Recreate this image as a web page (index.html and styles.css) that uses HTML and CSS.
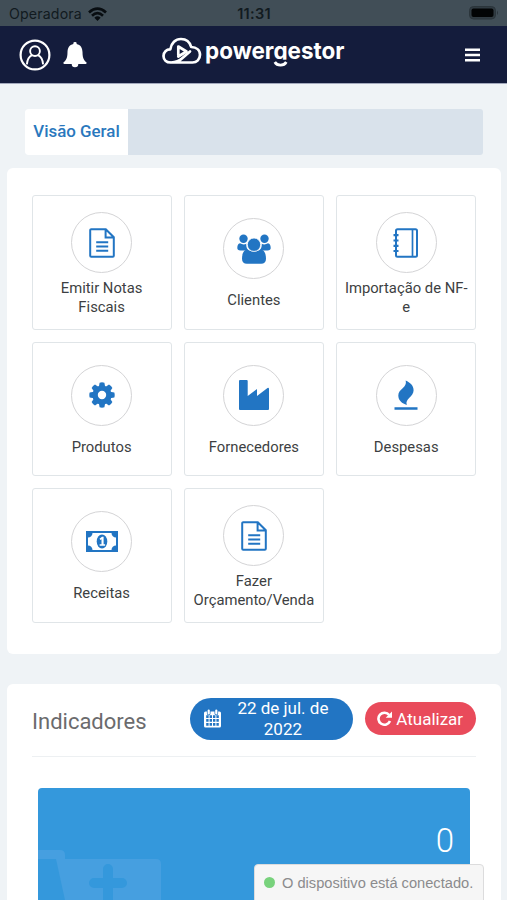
FILE: index.html
```html
<!DOCTYPE html>
<html lang="pt-BR">
<head>
<meta charset="utf-8">
<title>Powergestor</title>
<link rel="stylesheet" href="styles.css">
</head>
<body>
<svg class="defs" aria-hidden="true">
  <symbol id="file" viewBox="0 0 26 30">
    <path d="M2.2 1.2h14.6l8 8v18.6a1 1 0 0 1-1 1H2.200a1 1 0 0 1-1-1V2.200a1 1 0 0 1 1-1zM16.600 1.500v8h8M7.200 14.200h12M7.200 18.500h12M7.200 22.800h12" fill="none" stroke="currentColor" stroke-width="2"/>
  </symbol>
</svg>
<div class="status">
  <div class="carrier">Operadora
    <svg width="19" height="14" viewBox="0 0 19 14"><g fill="none" stroke="#080d11" stroke-width="2.700"><path d="M1 5.400Q9.500-2.200 18 5.400"/><path d="M4 8.700Q9.500 3.700 15 8.700"/></g><path d="M6.400 10.700Q9.500 8 12.600 10.700L9.500 14z" fill="#080d11"/></svg>
  </div>
  <div class="clock">11:31</div>
  <svg class="battery" width="30" height="14" viewBox="0 0 30 14"><rect x=".5" y=".5" width="26" height="12.500" rx="4" fill="#303b42" stroke="#2b353b"/><rect x="2.500" y="2.500" width="22" height="8.500" rx="2" fill="#020405"/><path d="M28 4.500q2 2.300 0 4.600z" fill="#2b353b"/></svg>
</div>
<header class="header">
  <div class="tools">
    <svg width="32" height="32" viewBox="0 0 32 32" fill="none" stroke="#fff"><circle cx="16" cy="16" r="14.400" stroke-width="2.200"/><circle cx="16" cy="12.100" r="4.900" stroke-width="1.900"/><path d="M7.900 25.300C8.300 20.500 10.700 17.300 13 16.200M19 16.200c2.300 1.100 4.700 4.300 5.100 9.100" stroke-width="1.900"/></svg>
    <svg width="24" height="26" viewBox="0 0 24 26"><path d="M12 0a1.600 1.600 0 0 1 1.600 1.900C17.600 2.700 19.500 6 19.500 10c0 6.500 1.800 8.700 4 10.500.5.700.1 1.400-.7 1.400h-7.500a3.300 3.300 0 0 1-6.600 0H1.200c-.8 0-1.200-.7-.7-1.400C2.700 18.700 4.500 16.500 4.500 10c0-4 1.900-7.300 5.900-8.100A1.600 1.600 0 0 1 12 0z" fill="#fff"/></svg>
  </div>
  <svg class="logo" width="186" height="34" viewBox="0 0 186 34">
    <g fill="none" stroke="#fff" stroke-width="2.700" stroke-linejoin="round" stroke-linecap="round"><path d="M8.500 25.500C4.500 25.500 1.500 22.800 1.500 19c0-4 3-6.700 6.800-6.600C9.200 6 13.600 2 19 2c5 0 8.800 3 10.200 8 5.200.2 8.800 3 8.800 7.800 0 4.500-3.200 7.700-7.500 7.700H9c5.500 0 8.500-1.500 11.500-4.500l7.500-6.500"/><path d="M16.300 18V9.500l8.200 5-8.200 5"/></g>
    <text class="wordmark" x="43" y="22" textLength="139.500" lengthAdjust="spacingAndGlyphs">powergestor</text>
    <path d="M110.500 22.700h15v7.500h-15z" fill="#141c3c"/>
    <path d="M112.800 25c2.300 4.200 9.200 4.200 11.500 0" fill="none" stroke="#fff" stroke-width="2.700"/>
  </svg>
  <svg width="15" height="14" viewBox="0 0 15 14"><path d="M0 1.700h15M0 7h15M0 12.300h15" stroke="#fff" stroke-width="2.600"/></svg>
</header>
<main>
  <nav class="tabs"><a class="tab">Visão Geral</a></nav>
  <section class="panel shortcuts">
    <a class="card tall"><span class="ring"><svg width="26" height="30"><use href="#file"/></svg></span><span>Emitir Notas Fiscais</span></a>
    <a class="card"><span class="ring"><svg width="34" height="30" viewBox="0 0 34 30" fill="currentColor"><circle cx="6.500" cy="4.700" r="4.200"/><circle cx="27.500" cy="4.700" r="4.200"/><path d="M3 9.300c2 1.300 4.500 1.400 6.300.5-.3 2.700.6 5 2.200 6.700H3.500C1.200 16.500.3 15.500.3 14c0-2.500.8-4.700 2.700-4.700zM31 9.300c-2 1.300-4.500 1.400-6.300.5.3 2.700-.6 5-2.200 6.700h8c2.300 0 3.200-1 3.200-2.500 0-2.500-.8-4.700-2.700-4.700z"/><path d="M10.700 15.500c4 2.700 8.600 2.700 12.600 0 3.700 0 5.700 4 5.700 9.200 0 3.300-1.900 5.100-4.800 5.100H9.800C6.900 29.800 5 28 5 24.700c0-5.200 2-9.200 5.700-9.200z"/><circle cx="17" cy="10.700" r="6.700" stroke="#fff" stroke-width=".8"/></svg></span><span>Clientes</span></a>
    <a class="card tall"><span class="ring"><svg width="26" height="30" viewBox="0 0 26 30" fill="none" stroke="currentColor"><rect x="3" y="1.200" width="21" height="27.600" rx="1.500" stroke-width="2"/><path d="M19.500 1v28" stroke-width="1.700"/><path d="M.5 7.200h5M.5 12.500h5M.5 17.800h5M.5 23h5" stroke-width="2.200"/></svg></span><span>Importação de NF-e</span></a>
    <a class="card"><span class="ring"><svg width="26" height="26" viewBox="-13 -13 26 26" fill="currentColor"><circle r="6.900" fill="none" stroke="currentColor" stroke-width="5.400"/><g id="teeth"><path id="tooth" d="M-3.200-8l.8-4.300q2.400-.8 4.800 0l.8 4.300z"/><use href="#tooth" transform="rotate(90)"/><use href="#tooth" transform="rotate(180)"/><use href="#tooth" transform="rotate(270)"/></g><use href="#teeth" transform="rotate(45)"/></svg></span><span>Produtos</span></a>
    <a class="card"><span class="ring"><svg width="30" height="30" viewBox="0 0 30 30" fill="currentColor"><path d="M0 1q0-1 1-1h6.700q1 0 1 1v15l9.300-7v7l10.500-8q1.200-.5 1.500.7V29q0 1-1 1H1q-1 0-1-1z"/></svg></span><span>Fornecedores</span></a>
    <a class="card"><span class="ring"><svg width="24" height="30" viewBox="0 0 24 30" fill="currentColor"><path d="M11.700.5C13.500 8 4.300 8.500 4.300 15.500c0 5 3.800 8 8.500 9.500C10.700 18.500 19.600 17 19.600 10.200 19.600 5.500 16 2.500 11.700.5zM.5 27.300h23v2.400H.5z"/></svg></span><span>Despesas</span></a>
    <a class="card"><span class="ring"><svg width="32" height="21" viewBox="0 0 32 21"><path d="M0 0h32v21H0z" fill="currentColor"/><path d="M6.500 2h19a4.500 4.500 0 0 0 4.500 4.500v8a4.500 4.500 0 0 0-4.500 4.500h-19A4.500 4.500 0 0 0 2 14.500v-8A4.500 4.500 0 0 0 6.500 2z" fill="#fff"/><ellipse cx="16" cy="10.500" rx="5.300" ry="6.900" fill="currentColor"/><path d="M13.500 7.800L16 5.800h1.600v7.400h1.500v1.600h-5.500v-1.600h1.900V8.300l-1 .8z" fill="#fff"/></svg></span><span>Receitas</span></a>
    <a class="card tall"><span class="ring"><svg width="26" height="30"><use href="#file"/></svg></span><span>Fazer Orçamento/Venda</span></a>
  </section>
  <section class="panel indicators">
    <div class="heading">
      <h2>Indicadores</h2>
      <button class="date"><svg width="17" height="19" viewBox="0 0 17 19"><rect x="0" y="2.500" width="17" height="16" rx="1.500" fill="#fff"/><path d="M2.200 7.700h12.600M2.200 11.400h12.600M2.200 15.300h12.600" stroke="#2275c3" stroke-width="2.700" stroke-dasharray="2.400 1"/><path d="M4.700 2v2.600M12.300 2v2.600" stroke="#2275c3" stroke-width="3.600" stroke-linecap="round"/><path d="M4.700 1.500v3M12.300 1.500v3" stroke="#fff" stroke-width="2.200" stroke-linecap="round"/></svg><span>22 de jul. de 2022</span></button>
      <button class="refresh"><svg width="15" height="15" viewBox="0 0 15 15"><path d="M12.200 4A6 6 0 1 0 13 10" fill="none" stroke="#fff" stroke-width="2.600"/><path d="M15 .5v6.200H8.700z" fill="#fff"/></svg>Atualizar</button>
    </div>
    <div class="tile">
      <svg class="cart" width="123" height="54" viewBox="0 0 123 54"><path d="M0 4h22q5 0 5 5v4H0z" fill="#469fe0"/><path d="M18 13h100q5 0 5 5v36H27z" fill="#469fe0"/><path d="M56 37h28M70 23v31" stroke="#3498dc" stroke-width="10" stroke-linecap="round"/></svg>
      <span class="count">0</span>
    </div>
  </section>
</main>
<div class="toast"><i></i>O dispositivo está conectado.</div>
</body>
</html>
```
FILE: styles.css
```css
* { box-sizing: border-box; }
html, body { height: 900px; overflow: hidden; }
body { margin: 0; background: #eff3f6; font-family: Roboto, sans-serif; color: #3d3f42; }
svg { display: block; flex: none; }
.defs { position: absolute; width: 0; height: 0; }
.status { height: 26px; padding: 0 8px 0 9px; background: #414e57; color: #111a20; display: grid; grid-template-columns: 1fr auto 1fr; align-items: center; font: 14.2px Inter, sans-serif; }
.carrier { display: flex; align-items: center; gap: 6px; padding-top: 1px; letter-spacing: .15px; }
.clock { font-weight: 600; font-size: 14.5px; letter-spacing: .3px; padding-top: 1px; }
.battery { justify-self: end; }
.header { height: 58px; padding: 0 27px 0 19px; background: #141c3c; border-bottom: 1px solid #a3a9bd; display: grid; grid-template-columns: 143px 1fr auto; align-items: center; }
.tools { display: flex; align-items: center; gap: 12px; }
.logo { margin-top: -1px; overflow: visible; }
.wordmark { font: 700 23.5px Inter, sans-serif; fill: #fff; }
.tabs { margin: 25px 24px 0 25px; height: 46px; background: #d9e2eb; border-radius: 3px; display: flex; }
.tab { width: 103px; background: #fff; border-radius: 3px 0 0 3px; color: #2a78bd; font-size: 16.9px; font-weight: 500; line-height: 44px; text-align: center; white-space: nowrap; }
.panel { margin: 0 6px 0 7px; background: #fff; border-radius: 6px; }
.shortcuts { margin-top: 13px; height: 486px; padding: 27px 24px 0 24.600px; display: grid; grid-template-columns: repeat(3, 140px); grid-auto-rows: 134.500px; align-content: start; gap: 12.200px 12.300px; }
.card { border: 1.500px solid #e0e5e8; border-radius: 3px; padding: 22px 6px 0; display: flex; flex-direction: column; align-items: center; gap: 12px; font-size: 14.800px; line-height: 18.500px; text-align: center; }
.card.tall { padding-top: 16px; gap: 6px; }
.ring { width: 61px; height: 61px; flex: none; border: 1.500px solid #d4d4d6; border-radius: 50%; display: flex; align-items: center; justify-content: center; color: #2275c3; }
.indicators { margin-top: 30px; padding: 0 25px; height: 240px; }
.heading { height: 73px; border-bottom: 1px solid #edf0f2; display: flex; align-items: center; }
h2 { margin: 3px 0 0; width: 158px; font-size: 22px; font-weight: 400; color: #6b6b6d; }
button { border: 0; color: #fff; font: 17px Roboto, sans-serif; display: flex; align-items: center; white-space: nowrap; }
.date { width: 164px; height: 42px; padding: 0 12px 0 14px; border-radius: 21px; background: #2275c3; line-height: 21px; margin-top: -3px; }
.date span { flex: 1; padding: 0 12px 0 16px; white-space: normal; text-align: center; }
.refresh { width: 111px; height: 33px; margin: -3px 0 0 12px; padding: 0 0 0 12px; gap: 4px; border-radius: 17px; background: #e94b5b; }
.tile { margin: 31px 6px 0 5.500px; height: 136px; background: #3498dc; border-radius: 4px; position: relative; }
.cart { position: absolute; left: 0; top: 58px; }
.count { position: absolute; right: 16px; top: 33px; font-size: 33px; line-height: 40px; font-weight: 300; color: #fff; }
.toast { position: absolute; left: 254px; top: 864px; width: 230px; height: 40px; border: 1px solid #dcdcdd; border-radius: 4px; background: #f6f6f6; color: #8b8b8d; font: 14.650px/36px "Liberation Sans", sans-serif; display: flex; padding-left: 9px; white-space: nowrap; }
.toast i { width: 11px; height: 11px; margin: 12px 7px 0 0; border-radius: 50%; background: #78d27c; flex: none; }
```
